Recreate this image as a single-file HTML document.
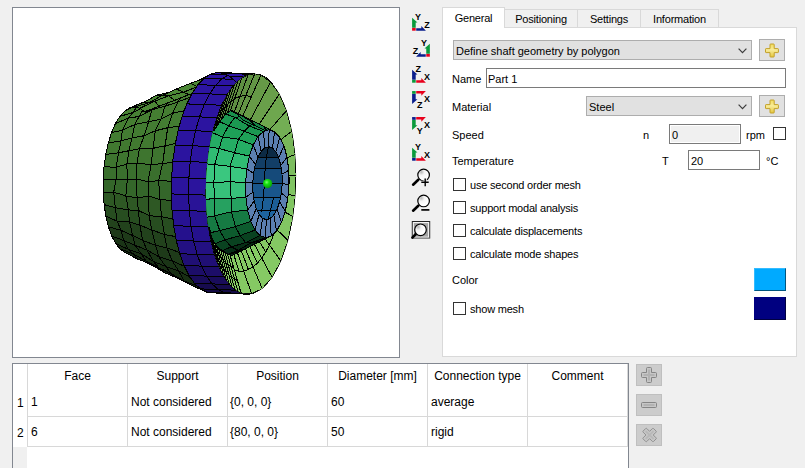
<!DOCTYPE html>
<html><head><meta charset="utf-8"><title>Shaft part</title>
<style>
html,body{margin:0;padding:0}
body{width:805px;height:468px;background:#f0f0f0;position:relative;overflow:hidden;font-family:"Liberation Sans",sans-serif;font-size:11px;color:#000}
.abs,.abs *{position:absolute;box-sizing:border-box}
#view{left:12px;top:7px;width:388px;height:351px;background:#fff;border:1px solid #828790}
#view svg{left:-13px;top:-8px}
.t{white-space:nowrap;line-height:14px;height:14px}
#pane{left:442px;top:27px;width:355px;height:330px;background:#fff;border:1px solid #d9d9d9}
.tab{letter-spacing:-0.2px;top:9px;height:19px;background:#f0f0f0;border:1px solid #d9d9d9;text-align:center;line-height:19px;white-space:nowrap}
.tab.sel{top:7px;height:21px;background:#fff;border-bottom:none;line-height:21px}
.combo{background:#e1e1e1;border:1px solid #adadad;height:20px;line-height:20px;padding-left:2px;white-space:nowrap}
.combo svg{right:4px;top:7px}
.btn{background:#e1e1e1;border:1px solid #adadad}
.inp{background:#fff;border:1px solid #7a7a7a;height:20px;line-height:20px;padding-left:1px;white-space:nowrap}
.cb{width:13px;height:13px;background:#fff;border:1px solid #333}
#tbl{left:12px;top:363px;width:617px;height:110px;background:#fff;border:1px solid #828790}
.seg{font-size:12px;line-height:16px;height:16px;white-space:nowrap}
.vl{width:1px;background:#d8d8d8}
.hl{height:1px;background:#d8d8d8}
.dbtn{left:636px;width:26px;height:22px;background:#cccccc;border:1px solid #bfbfbf}
</style></head><body>
<div class="abs" id="view">
<svg width="400" height="358" viewBox="0 0 400 358" shape-rendering="crispEdges" stroke-linejoin="round">
<path d="M140.0 249.7 L135.0 252.8 L149.0 258.5 L154.4 255.3Z" fill="#12230f" stroke="#000" stroke-width="1"/>
<path d="M154.4 255.3 L149.0 258.5 L163.2 266.1 L169.0 263.2Z" fill="#12230f" stroke="#000" stroke-width="1"/>
<path d="M169.0 263.2 L163.2 266.1 L177.6 271.9 L182.7 267.8Z" fill="#12230f" stroke="#000" stroke-width="1"/>
<path d="M182.7 267.8 L177.6 271.9 L190.4 280.1 L197.7 274.1Z" fill="#12230f" stroke="#000" stroke-width="1"/>
<path d="M197.7 274.1 L190.4 280.1 L205.4 285.2 L213.1 279.1Z" fill="#12230f" stroke="#000" stroke-width="1"/>
<path d="M213.1 279.1 L205.4 285.2 L219.2 291.5 L226.7 286.8Z" fill="#12230f" stroke="#000" stroke-width="1"/>
<path d="M135.0 252.8 L129.9 253.8 L143.5 261.3 L149.0 258.5Z" fill="#132410" stroke="#000" stroke-width="1"/>
<path d="M149.0 258.5 L143.5 261.3 L157.2 268.0 L163.2 266.1Z" fill="#132410" stroke="#000" stroke-width="1"/>
<path d="M163.2 266.1 L157.2 268.0 L170.2 274.5 L177.6 271.9Z" fill="#132410" stroke="#000" stroke-width="1"/>
<path d="M177.6 271.9 L170.2 274.5 L184.3 279.2 L190.4 280.1Z" fill="#132410" stroke="#000" stroke-width="1"/>
<path d="M190.4 280.1 L184.3 279.2 L198.5 287.0 L205.4 285.2Z" fill="#132410" stroke="#000" stroke-width="1"/>
<path d="M205.4 285.2 L198.5 287.0 L211.5 292.9 L219.2 291.5Z" fill="#132410" stroke="#000" stroke-width="1"/>
<path d="M129.9 253.8 L124.8 252.5 L137.3 258.9 L143.5 261.3Z" fill="#142710" stroke="#000" stroke-width="1"/>
<path d="M143.5 261.3 L137.3 258.9 L151.0 264.2 L157.2 268.0Z" fill="#142710" stroke="#000" stroke-width="1"/>
<path d="M157.2 268.0 L151.0 264.2 L164.1 272.5 L170.2 274.5Z" fill="#142710" stroke="#000" stroke-width="1"/>
<path d="M170.2 274.5 L164.1 272.5 L177.7 278.2 L184.3 279.2Z" fill="#142710" stroke="#000" stroke-width="1"/>
<path d="M184.3 279.2 L177.7 278.2 L191.4 285.1 L198.5 287.0Z" fill="#142710" stroke="#000" stroke-width="1"/>
<path d="M198.5 287.0 L191.4 285.1 L204.0 291.0 L211.5 292.9Z" fill="#142710" stroke="#000" stroke-width="1"/>
<path d="M124.8 252.5 L120.1 249.0 L133.0 253.7 L137.3 258.9Z" fill="#152a12" stroke="#000" stroke-width="1"/>
<path d="M137.3 258.9 L133.0 253.7 L146.4 261.4 L151.0 264.2Z" fill="#152a12" stroke="#000" stroke-width="1"/>
<path d="M151.0 264.2 L146.4 261.4 L158.9 267.8 L164.1 272.5Z" fill="#152a12" stroke="#000" stroke-width="1"/>
<path d="M164.1 272.5 L158.9 267.8 L171.6 274.0 L177.7 278.2Z" fill="#152a12" stroke="#000" stroke-width="1"/>
<path d="M177.7 278.2 L171.6 274.0 L184.1 281.0 L191.4 285.1Z" fill="#152a12" stroke="#000" stroke-width="1"/>
<path d="M191.4 285.1 L184.1 281.0 L196.8 285.8 L204.0 291.0Z" fill="#152a12" stroke="#000" stroke-width="1"/>
<path d="M120.1 249.0 L115.6 243.4 L128.3 249.3 L133.0 253.7Z" fill="#182e13" stroke="#000" stroke-width="1"/>
<path d="M133.0 253.7 L128.3 249.3 L141.1 253.6 L146.4 261.4Z" fill="#182e13" stroke="#000" stroke-width="1"/>
<path d="M146.4 261.4 L141.1 253.6 L153.2 261.3 L158.9 267.8Z" fill="#182e13" stroke="#000" stroke-width="1"/>
<path d="M158.9 267.8 L153.2 261.3 L165.6 266.4 L171.6 274.0Z" fill="#182e13" stroke="#000" stroke-width="1"/>
<path d="M171.6 274.0 L165.6 266.4 L178.6 270.8 L184.1 281.0Z" fill="#182e13" stroke="#000" stroke-width="1"/>
<path d="M184.1 281.0 L178.6 270.8 L190.2 277.4 L196.8 285.8Z" fill="#182e13" stroke="#000" stroke-width="1"/>
<path d="M115.6 243.4 L111.7 236.0 L123.6 240.5 L128.3 249.3Z" fill="#1a3416" stroke="#000" stroke-width="1"/>
<path d="M128.3 249.3 L123.6 240.5 L135.2 245.3 L141.1 253.6Z" fill="#1a3416" stroke="#000" stroke-width="1"/>
<path d="M141.1 253.6 L135.2 245.3 L147.1 250.1 L153.2 261.3Z" fill="#1a3416" stroke="#000" stroke-width="1"/>
<path d="M153.2 261.3 L147.1 250.1 L158.9 256.8 L165.6 266.4Z" fill="#1a3416" stroke="#000" stroke-width="1"/>
<path d="M165.6 266.4 L158.9 256.8 L172.2 260.9 L178.6 270.8Z" fill="#1a3416" stroke="#000" stroke-width="1"/>
<path d="M178.6 270.8 L172.2 260.9 L184.3 266.2 L190.2 277.4Z" fill="#1a3416" stroke="#000" stroke-width="1"/>
<path d="M111.7 236.0 L108.4 226.8 L121.2 230.4 L123.6 240.5Z" fill="#1e3a19" stroke="#000" stroke-width="1"/>
<path d="M123.6 240.5 L121.2 230.4 L132.7 235.5 L135.2 245.3Z" fill="#1e3a19" stroke="#000" stroke-width="1"/>
<path d="M135.2 245.3 L132.7 235.5 L142.7 240.5 L147.1 250.1Z" fill="#1e3a19" stroke="#000" stroke-width="1"/>
<path d="M147.1 250.1 L142.7 240.5 L155.5 245.2 L158.9 256.8Z" fill="#1e3a19" stroke="#000" stroke-width="1"/>
<path d="M158.9 256.8 L155.5 245.2 L167.0 247.9 L172.2 260.9Z" fill="#1e3a19" stroke="#000" stroke-width="1"/>
<path d="M172.2 260.9 L167.0 247.9 L179.3 252.4 L184.3 266.2Z" fill="#1e3a19" stroke="#000" stroke-width="1"/>
<path d="M108.4 226.8 L105.9 216.2 L117.0 221.1 L121.2 230.4Z" fill="#22421c" stroke="#000" stroke-width="1"/>
<path d="M121.2 230.4 L117.0 221.1 L129.5 222.0 L132.7 235.5Z" fill="#22421c" stroke="#000" stroke-width="1"/>
<path d="M132.7 235.5 L129.5 222.0 L139.8 225.1 L142.7 240.5Z" fill="#22421c" stroke="#000" stroke-width="1"/>
<path d="M142.7 240.5 L139.8 225.1 L151.8 230.0 L155.5 245.2Z" fill="#22421c" stroke="#000" stroke-width="1"/>
<path d="M155.5 245.2 L151.8 230.0 L164.4 234.4 L167.0 247.9Z" fill="#22421c" stroke="#000" stroke-width="1"/>
<path d="M167.0 247.9 L164.4 234.4 L175.5 236.6 L179.3 252.4Z" fill="#22421c" stroke="#000" stroke-width="1"/>
<path d="M105.9 216.2 L104.1 204.6 L115.3 207.7 L117.0 221.1Z" fill="#274d20" stroke="#000" stroke-width="1"/>
<path d="M117.0 221.1 L115.3 207.7 L128.4 209.9 L129.5 222.0Z" fill="#274d20" stroke="#000" stroke-width="1"/>
<path d="M129.5 222.0 L128.4 209.9 L138.4 210.5 L139.8 225.1Z" fill="#274d20" stroke="#000" stroke-width="1"/>
<path d="M139.8 225.1 L138.4 210.5 L149.1 215.6 L151.8 230.0Z" fill="#274d20" stroke="#000" stroke-width="1"/>
<path d="M151.8 230.0 L149.1 215.6 L161.5 216.8 L164.4 234.4Z" fill="#274d20" stroke="#000" stroke-width="1"/>
<path d="M164.4 234.4 L161.5 216.8 L172.8 219.0 L175.5 236.6Z" fill="#274d20" stroke="#000" stroke-width="1"/>
<path d="M104.1 204.6 L103.2 192.2 L113.7 192.2 L115.3 207.7Z" fill="#2e5824" stroke="#000" stroke-width="1"/>
<path d="M115.3 207.7 L113.7 192.2 L125.8 195.9 L128.4 209.9Z" fill="#2e5824" stroke="#000" stroke-width="1"/>
<path d="M128.4 209.9 L125.8 195.9 L137.1 197.9 L138.4 210.5Z" fill="#2e5824" stroke="#000" stroke-width="1"/>
<path d="M138.4 210.5 L137.1 197.9 L148.6 196.1 L149.1 215.6Z" fill="#2e5824" stroke="#000" stroke-width="1"/>
<path d="M149.1 215.6 L148.6 196.1 L160.0 199.6 L161.5 216.8Z" fill="#2e5824" stroke="#000" stroke-width="1"/>
<path d="M161.5 216.8 L160.0 199.6 L171.5 200.4 L172.8 219.0Z" fill="#2e5824" stroke="#000" stroke-width="1"/>
<path d="M103.2 192.2 L103.2 179.4 L116.1 179.5 L113.7 192.2Z" fill="#34662a" stroke="#000" stroke-width="1"/>
<path d="M113.7 192.2 L116.1 179.5 L127.3 179.4 L125.8 195.9Z" fill="#34662a" stroke="#000" stroke-width="1"/>
<path d="M125.8 195.9 L127.3 179.4 L136.2 179.0 L137.1 197.9Z" fill="#34662a" stroke="#000" stroke-width="1"/>
<path d="M137.1 197.9 L136.2 179.0 L148.1 181.6 L148.6 196.1Z" fill="#34662a" stroke="#000" stroke-width="1"/>
<path d="M148.6 196.1 L148.1 181.6 L158.6 180.7 L160.0 199.6Z" fill="#34662a" stroke="#000" stroke-width="1"/>
<path d="M160.0 199.6 L158.6 180.7 L171.4 181.2 L171.5 200.4Z" fill="#34662a" stroke="#000" stroke-width="1"/>
<path d="M103.2 179.4 L104.0 166.7 L116.2 167.3 L116.1 179.5Z" fill="#3a6f2d" stroke="#000" stroke-width="1"/>
<path d="M116.1 179.5 L116.2 167.3 L126.9 164.0 L127.3 179.4Z" fill="#3a6f2d" stroke="#000" stroke-width="1"/>
<path d="M127.3 179.4 L126.9 164.0 L136.9 163.3 L136.2 179.0Z" fill="#3a6f2d" stroke="#000" stroke-width="1"/>
<path d="M136.2 179.0 L136.9 163.3 L151.1 164.6 L148.1 181.6Z" fill="#3a6f2d" stroke="#000" stroke-width="1"/>
<path d="M148.1 181.6 L151.1 164.6 L162.6 163.6 L158.6 180.7Z" fill="#3a6f2d" stroke="#000" stroke-width="1"/>
<path d="M158.6 180.7 L162.6 163.6 L172.7 162.1 L171.4 181.2Z" fill="#3a6f2d" stroke="#000" stroke-width="1"/>
<path d="M104.0 166.7 L105.8 154.4 L118.5 152.8 L116.2 167.3Z" fill="#3e752f" stroke="#000" stroke-width="1"/>
<path d="M116.2 167.3 L118.5 152.8 L129.0 150.7 L126.9 164.0Z" fill="#3e752f" stroke="#000" stroke-width="1"/>
<path d="M126.9 164.0 L129.0 150.7 L139.4 148.7 L136.9 163.3Z" fill="#3e752f" stroke="#000" stroke-width="1"/>
<path d="M136.9 163.3 L139.4 148.7 L153.1 148.3 L151.1 164.6Z" fill="#3e752f" stroke="#000" stroke-width="1"/>
<path d="M151.1 164.6 L153.1 148.3 L165.1 145.8 L162.6 163.6Z" fill="#3e752f" stroke="#000" stroke-width="1"/>
<path d="M162.6 163.6 L165.1 145.8 L175.3 143.6 L172.7 162.1Z" fill="#3e752f" stroke="#000" stroke-width="1"/>
<path d="M105.8 154.4 L108.3 142.9 L121.1 140.8 L118.5 152.8Z" fill="#417930" stroke="#000" stroke-width="1"/>
<path d="M118.5 152.8 L121.1 140.8 L131.9 138.1 L129.0 150.7Z" fill="#417930" stroke="#000" stroke-width="1"/>
<path d="M129.0 150.7 L131.9 138.1 L144.1 135.7 L139.4 148.7Z" fill="#417930" stroke="#000" stroke-width="1"/>
<path d="M139.4 148.7 L144.1 135.7 L155.3 130.8 L153.1 148.3Z" fill="#417930" stroke="#000" stroke-width="1"/>
<path d="M153.1 148.3 L155.3 130.8 L167.7 127.7 L165.1 145.8Z" fill="#417930" stroke="#000" stroke-width="1"/>
<path d="M165.1 145.8 L167.7 127.7 L179.1 126.3 L175.3 143.6Z" fill="#417930" stroke="#000" stroke-width="1"/>
<path d="M108.3 142.9 L111.6 132.5 L122.4 130.2 L121.1 140.8Z" fill="#437c32" stroke="#000" stroke-width="1"/>
<path d="M121.1 140.8 L122.4 130.2 L134.6 124.6 L131.9 138.1Z" fill="#437c32" stroke="#000" stroke-width="1"/>
<path d="M131.9 138.1 L134.6 124.6 L148.6 121.7 L144.1 135.7Z" fill="#437c32" stroke="#000" stroke-width="1"/>
<path d="M144.1 135.7 L148.6 121.7 L161.1 119.1 L155.3 130.8Z" fill="#437c32" stroke="#000" stroke-width="1"/>
<path d="M155.3 130.8 L161.1 119.1 L172.7 113.2 L167.7 127.7Z" fill="#437c32" stroke="#000" stroke-width="1"/>
<path d="M167.7 127.7 L172.7 113.2 L184.0 110.7 L179.1 126.3Z" fill="#437c32" stroke="#000" stroke-width="1"/>
<path d="M111.6 132.5 L115.4 123.6 L128.2 118.2 L122.4 130.2Z" fill="#457e32" stroke="#000" stroke-width="1"/>
<path d="M122.4 130.2 L128.2 118.2 L139.2 116.4 L134.6 124.6Z" fill="#457e32" stroke="#000" stroke-width="1"/>
<path d="M134.6 124.6 L139.2 116.4 L151.9 109.7 L148.6 121.7Z" fill="#457e32" stroke="#000" stroke-width="1"/>
<path d="M148.6 121.7 L151.9 109.7 L164.9 106.2 L161.1 119.1Z" fill="#457e32" stroke="#000" stroke-width="1"/>
<path d="M161.1 119.1 L164.9 106.2 L177.8 102.0 L172.7 113.2Z" fill="#457e32" stroke="#000" stroke-width="1"/>
<path d="M172.7 113.2 L177.8 102.0 L189.9 97.3 L184.0 110.7Z" fill="#457e32" stroke="#000" stroke-width="1"/>
<path d="M115.4 123.6 L119.8 116.4 L133.6 112.4 L128.2 118.2Z" fill="#478134" stroke="#000" stroke-width="1"/>
<path d="M128.2 118.2 L133.6 112.4 L145.2 105.8 L139.2 116.4Z" fill="#478134" stroke="#000" stroke-width="1"/>
<path d="M139.2 116.4 L145.2 105.8 L157.5 100.5 L151.9 109.7Z" fill="#478134" stroke="#000" stroke-width="1"/>
<path d="M151.9 109.7 L157.5 100.5 L171.6 97.9 L164.9 106.2Z" fill="#478134" stroke="#000" stroke-width="1"/>
<path d="M164.9 106.2 L171.6 97.9 L184.3 91.4 L177.8 102.0Z" fill="#478134" stroke="#000" stroke-width="1"/>
<path d="M177.8 102.0 L184.3 91.4 L196.5 86.5 L189.9 97.3Z" fill="#478134" stroke="#000" stroke-width="1"/>
<path d="M119.8 116.4 L124.6 111.1 L137.3 104.5 L133.6 112.4Z" fill="#488334" stroke="#000" stroke-width="1"/>
<path d="M133.6 112.4 L137.3 104.5 L151.7 100.2 L145.2 105.8Z" fill="#488334" stroke="#000" stroke-width="1"/>
<path d="M145.2 105.8 L151.7 100.2 L163.4 94.4 L157.5 100.5Z" fill="#488334" stroke="#000" stroke-width="1"/>
<path d="M157.5 100.5 L163.4 94.4 L177.2 89.4 L171.6 97.9Z" fill="#488334" stroke="#000" stroke-width="1"/>
<path d="M171.6 97.9 L177.2 89.4 L191.1 83.5 L184.3 91.4Z" fill="#488334" stroke="#000" stroke-width="1"/>
<path d="M184.3 91.4 L191.1 83.5 L203.7 78.6 L196.5 86.5Z" fill="#488334" stroke="#000" stroke-width="1"/>
<path d="M124.6 111.1 L129.6 108.0 L143.6 102.3 L137.3 104.5Z" fill="#498435" stroke="#000" stroke-width="1"/>
<path d="M137.3 104.5 L143.6 102.3 L156.9 95.1 L151.7 100.2Z" fill="#498435" stroke="#000" stroke-width="1"/>
<path d="M151.7 100.2 L156.9 95.1 L171.2 92.0 L163.4 94.4Z" fill="#498435" stroke="#000" stroke-width="1"/>
<path d="M163.4 94.4 L171.2 92.0 L184.7 85.5 L177.2 89.4Z" fill="#498435" stroke="#000" stroke-width="1"/>
<path d="M177.2 89.4 L184.7 85.5 L197.3 81.0 L191.1 83.5Z" fill="#498435" stroke="#000" stroke-width="1"/>
<path d="M191.1 83.5 L197.3 81.0 L211.2 73.9 L203.7 78.6Z" fill="#498435" stroke="#000" stroke-width="1"/>
<path d="M129.6 108.0 L134.7 107.0 L148.4 102.9 L143.6 102.3Z" fill="#4a8535" stroke="#000" stroke-width="1"/>
<path d="M143.6 102.3 L148.4 102.9 L162.4 95.4 L156.9 95.1Z" fill="#4a8535" stroke="#000" stroke-width="1"/>
<path d="M156.9 95.1 L162.4 95.4 L176.3 89.0 L171.2 92.0Z" fill="#4a8535" stroke="#000" stroke-width="1"/>
<path d="M171.2 92.0 L176.3 89.0 L190.7 83.3 L184.7 85.5Z" fill="#4a8535" stroke="#000" stroke-width="1"/>
<path d="M184.7 85.5 L190.7 83.3 L204.5 78.4 L197.3 81.0Z" fill="#4a8535" stroke="#000" stroke-width="1"/>
<path d="M197.3 81.0 L204.5 78.4 L218.9 72.5 L211.2 73.9Z" fill="#4a8535" stroke="#000" stroke-width="1"/>
<path d="M134.7 107.0 L139.8 108.3 L154.8 101.1 L148.4 102.9Z" fill="#4b8736" stroke="#000" stroke-width="1"/>
<path d="M148.4 102.9 L154.8 101.1 L168.7 95.8 L162.4 95.4Z" fill="#4b8736" stroke="#000" stroke-width="1"/>
<path d="M162.4 95.4 L168.7 95.8 L183.5 92.2 L176.3 89.0Z" fill="#4b8736" stroke="#000" stroke-width="1"/>
<path d="M176.3 89.0 L183.5 92.2 L197.6 86.6 L190.7 83.3Z" fill="#4b8736" stroke="#000" stroke-width="1"/>
<path d="M190.7 83.3 L197.6 86.6 L212.6 81.5 L204.5 78.4Z" fill="#4b8736" stroke="#000" stroke-width="1"/>
<path d="M204.5 78.4 L212.6 81.5 L226.4 74.4 L218.9 72.5Z" fill="#4b8736" stroke="#000" stroke-width="1"/>
<path d="M139.8 108.3 L144.5 111.8 L158.8 106.3 L154.8 101.1Z" fill="#4c8836" stroke="#000" stroke-width="1"/>
<path d="M154.8 101.1 L158.8 106.3 L174.7 100.3 L168.7 95.8Z" fill="#4c8836" stroke="#000" stroke-width="1"/>
<path d="M168.7 95.8 L174.7 100.3 L188.9 94.7 L183.5 92.2Z" fill="#4c8836" stroke="#000" stroke-width="1"/>
<path d="M183.5 92.2 L188.9 94.7 L204.0 90.1 L197.6 86.6Z" fill="#4c8836" stroke="#000" stroke-width="1"/>
<path d="M197.6 86.6 L204.0 90.1 L219.7 83.6 L212.6 81.5Z" fill="#4c8836" stroke="#000" stroke-width="1"/>
<path d="M212.6 81.5 L219.7 83.6 L233.6 79.6 L226.4 74.4Z" fill="#4c8836" stroke="#000" stroke-width="1"/>
<path d="M219.9 291.2 L213.3 292.9 L231.2 293.6 L237.9 291.9Z" fill="#11083a" stroke="#000" stroke-width="1"/>
<path d="M237.9 291.9 L231.2 293.6 L249.1 294.2 L255.9 292.5Z" fill="#11083a" stroke="#000" stroke-width="1"/>
<path d="M213.3 292.9 L206.8 292.1 L224.6 292.8 L231.2 293.6Z" fill="#12093f" stroke="#000" stroke-width="1"/>
<path d="M231.2 293.6 L224.6 292.8 L242.4 293.4 L249.1 294.2Z" fill="#12093f" stroke="#000" stroke-width="1"/>
<path d="M206.8 292.1 L200.4 288.9 L218.2 289.5 L224.6 292.8Z" fill="#130a44" stroke="#000" stroke-width="1"/>
<path d="M224.6 292.8 L218.2 289.5 L235.9 290.2 L242.4 293.4Z" fill="#130a44" stroke="#000" stroke-width="1"/>
<path d="M200.4 288.9 L194.4 283.3 L212.1 283.9 L218.2 289.5Z" fill="#160b4d" stroke="#000" stroke-width="1"/>
<path d="M218.2 289.5 L212.1 283.9 L229.8 284.6 L235.9 290.2Z" fill="#160b4d" stroke="#000" stroke-width="1"/>
<path d="M194.4 283.3 L188.9 275.4 L206.5 276.1 L212.1 283.9Z" fill="#190c5a" stroke="#000" stroke-width="1"/>
<path d="M212.1 283.9 L206.5 276.1 L224.1 276.7 L229.8 284.6Z" fill="#190c5a" stroke="#000" stroke-width="1"/>
<path d="M188.9 275.4 L184.0 265.5 L201.5 266.1 L206.5 276.1Z" fill="#1c0d68" stroke="#000" stroke-width="1"/>
<path d="M206.5 276.1 L201.5 266.1 L219.0 266.8 L224.1 276.7Z" fill="#1c0d68" stroke="#000" stroke-width="1"/>
<path d="M184.0 265.5 L179.7 253.7 L197.1 254.4 L201.5 266.1Z" fill="#200f75" stroke="#000" stroke-width="1"/>
<path d="M201.5 266.1 L197.1 254.4 L214.6 255.0 L219.0 266.8Z" fill="#200f75" stroke="#000" stroke-width="1"/>
<path d="M179.7 253.7 L176.2 240.4 L193.6 241.0 L197.1 254.4Z" fill="#231082" stroke="#000" stroke-width="1"/>
<path d="M197.1 254.4 L193.6 241.0 L211.0 241.6 L214.6 255.0Z" fill="#231082" stroke="#000" stroke-width="1"/>
<path d="M176.2 240.4 L173.7 225.7 L191.0 226.3 L193.6 241.0Z" fill="#25118d" stroke="#000" stroke-width="1"/>
<path d="M193.6 241.0 L191.0 226.3 L208.4 227.0 L211.0 241.6Z" fill="#25118d" stroke="#000" stroke-width="1"/>
<path d="M173.7 225.7 L172.0 210.1 L189.3 210.7 L191.0 226.3Z" fill="#271292" stroke="#000" stroke-width="1"/>
<path d="M191.0 226.3 L189.3 210.7 L206.6 211.4 L208.4 227.0Z" fill="#271292" stroke="#000" stroke-width="1"/>
<path d="M172.0 210.1 L171.3 193.9 L188.6 194.5 L189.3 210.7Z" fill="#291397" stroke="#000" stroke-width="1"/>
<path d="M189.3 210.7 L188.6 194.5 L205.9 195.1 L206.6 211.4Z" fill="#291397" stroke="#000" stroke-width="1"/>
<path d="M171.3 193.9 L171.6 177.4 L188.9 178.0 L188.6 194.5Z" fill="#2b149d" stroke="#000" stroke-width="1"/>
<path d="M188.6 194.5 L188.9 178.0 L206.2 178.7 L205.9 195.1Z" fill="#2b149d" stroke="#000" stroke-width="1"/>
<path d="M171.6 177.4 L172.8 161.0 L190.2 161.7 L188.9 178.0Z" fill="#2b149e" stroke="#000" stroke-width="1"/>
<path d="M188.9 178.0 L190.2 161.7 L207.5 162.3 L206.2 178.7Z" fill="#2b149e" stroke="#000" stroke-width="1"/>
<path d="M172.8 161.0 L175.1 145.2 L192.4 145.8 L190.2 161.7Z" fill="#2b149f" stroke="#000" stroke-width="1"/>
<path d="M190.2 161.7 L192.4 145.8 L209.7 146.4 L207.5 162.3Z" fill="#2b149f" stroke="#000" stroke-width="1"/>
<path d="M175.1 145.2 L178.2 130.1 L195.5 130.8 L192.4 145.8Z" fill="#2b149f" stroke="#000" stroke-width="1"/>
<path d="M192.4 145.8 L195.5 130.8 L212.9 131.4 L209.7 146.4Z" fill="#2b149f" stroke="#000" stroke-width="1"/>
<path d="M178.2 130.1 L182.1 116.3 L199.5 116.9 L195.5 130.8Z" fill="#2c14a0" stroke="#000" stroke-width="1"/>
<path d="M195.5 130.8 L199.5 116.9 L216.9 117.6 L212.9 131.4Z" fill="#2c14a0" stroke="#000" stroke-width="1"/>
<path d="M182.1 116.3 L186.8 103.9 L204.2 104.6 L199.5 116.9Z" fill="#2c14a0" stroke="#000" stroke-width="1"/>
<path d="M199.5 116.9 L204.2 104.6 L221.7 105.2 L216.9 117.6Z" fill="#2c14a0" stroke="#000" stroke-width="1"/>
<path d="M186.8 103.9 L192.1 93.3 L209.6 93.9 L204.2 104.6Z" fill="#2c14a1" stroke="#000" stroke-width="1"/>
<path d="M204.2 104.6 L209.6 93.9 L227.1 94.6 L221.7 105.2Z" fill="#2c14a1" stroke="#000" stroke-width="1"/>
<path d="M192.1 93.3 L197.9 84.7 L215.5 85.3 L209.6 93.9Z" fill="#2c14a1" stroke="#000" stroke-width="1"/>
<path d="M209.6 93.9 L215.5 85.3 L233.1 86.0 L227.1 94.6Z" fill="#2c14a1" stroke="#000" stroke-width="1"/>
<path d="M197.9 84.7 L204.1 78.3 L221.8 78.9 L215.5 85.3Z" fill="#2c14a2" stroke="#000" stroke-width="1"/>
<path d="M215.5 85.3 L221.8 78.9 L239.5 79.5 L233.1 86.0Z" fill="#2c14a2" stroke="#000" stroke-width="1"/>
<path d="M204.1 78.3 L210.5 74.2 L228.3 74.8 L221.8 78.9Z" fill="#2c14a2" stroke="#000" stroke-width="1"/>
<path d="M221.8 78.9 L228.3 74.8 L246.1 75.5 L239.5 79.5Z" fill="#2c14a2" stroke="#000" stroke-width="1"/>
<path d="M210.5 74.2 L217.1 72.5 L235.0 73.1 L228.3 74.8Z" fill="#2d14a3" stroke="#000" stroke-width="1"/>
<path d="M228.3 74.8 L235.0 73.1 L252.9 73.8 L246.1 75.5Z" fill="#2d14a3" stroke="#000" stroke-width="1"/>
<path d="M217.1 72.5 L223.6 73.3 L241.6 73.9 L235.0 73.1Z" fill="#2d14a3" stroke="#000" stroke-width="1"/>
<path d="M235.0 73.1 L241.6 73.9 L259.6 74.6 L252.9 73.8Z" fill="#2d14a3" stroke="#000" stroke-width="1"/>
<path d="M223.6 73.3 L230.0 76.5 L248.0 77.2 L241.6 73.9Z" fill="#2d14a4" stroke="#000" stroke-width="1"/>
<path d="M241.6 73.9 L248.0 77.2 L266.1 77.8 L259.6 74.6Z" fill="#2d14a4" stroke="#000" stroke-width="1"/>
<path d="M230.0 76.5 L236.0 82.1 L254.1 82.8 L248.0 77.2Z" fill="#2d14a4" stroke="#000" stroke-width="1"/>
<path d="M248.0 77.2 L254.1 82.8 L272.2 83.4 L266.1 77.8Z" fill="#2d14a4" stroke="#000" stroke-width="1"/>
<clipPath id="cC"><path d="M296.0 185.5 L295.7 191.3 L295.3 197.0 L294.8 202.7 L294.2 208.4 L293.5 214.0 L292.6 219.5 L291.7 224.9 L290.6 230.2 L289.4 235.4 L288.1 240.4 L286.7 245.3 L285.2 250.0 L283.7 254.5 L282.0 258.9 L280.2 263.0 L278.4 266.9 L276.5 270.6 L274.5 274.1 L272.4 277.3 L270.3 280.2 L268.2 282.9 L266.0 285.3 L263.7 287.5 L261.4 289.3 L259.1 290.9 L256.8 292.1 L254.4 293.1 L252.1 293.8 L249.7 294.2 L247.3 294.2 L245.0 294.0 L242.7 293.5 L240.4 292.6 L238.1 291.5 L235.8 290.1 L233.6 288.4 L231.5 286.4 L229.4 284.1 L227.3 281.5 L225.3 278.7 L223.4 275.6 L221.6 272.3 L219.9 268.7 L218.2 264.9 L216.6 260.9 L215.1 256.7 L213.7 252.2 L212.5 247.6 L211.3 242.8 L210.2 237.8 L209.3 232.7 L208.4 227.5 L207.7 222.1 L207.1 216.6 L206.6 211.1 L206.2 205.5 L206.0 199.8 L205.9 194.0 L205.9 188.3 L206.0 182.5 L206.3 176.7 L206.7 171.0 L207.2 165.3 L207.8 159.6 L208.5 154.0 L209.4 148.5 L210.3 143.1 L211.4 137.8 L212.6 132.6 L213.9 127.6 L215.3 122.7 L216.8 118.0 L218.3 113.5 L220.0 109.1 L221.8 105.0 L223.6 101.1 L225.5 97.4 L227.5 93.9 L229.6 90.7 L231.7 87.8 L233.8 85.1 L236.0 82.7 L238.3 80.5 L240.6 78.7 L242.9 77.1 L245.2 75.9 L247.6 74.9 L249.9 74.2 L252.3 73.8 L254.7 73.8 L257.0 74.0 L259.3 74.5 L261.6 75.4 L263.9 76.5 L266.2 77.9 L268.4 79.6 L270.5 81.6 L272.6 83.9 L274.7 86.5 L276.7 89.3 L278.6 92.4 L280.4 95.7 L282.1 99.3 L283.8 103.1 L285.4 107.1 L286.9 111.3 L288.3 115.8 L289.5 120.4 L290.7 125.2 L291.8 130.2 L292.7 135.3 L293.6 140.5 L294.3 145.9 L294.9 151.4 L295.4 156.9 L295.8 162.5 L296.0 168.2 L296.1 174.0 L296.1 179.7Z"/></clipPath>
<g clip-path="url(#cC)">
<path d="M251.0 184.0 L296.0 185.5 L295.5 194.1Z" fill="#80c462"/>
<path d="M251.0 184.0 L295.6 193.2 L294.9 201.8Z" fill="#81c562"/>
<path d="M251.0 184.0 L295.0 200.8 L294.1 209.3Z" fill="#81c562"/>
<path d="M251.0 184.0 L294.2 208.4 L293.1 216.7Z" fill="#81c562"/>
<path d="M251.0 184.0 L293.2 215.8 L291.8 224.0Z" fill="#82c663"/>
<path d="M251.0 184.0 L292.0 223.1 L290.4 231.1Z" fill="#82c663"/>
<path d="M251.0 184.0 L290.6 230.2 L288.8 237.9Z" fill="#83c763"/>
<path d="M251.0 184.0 L289.0 237.1 L287.0 244.5Z" fill="#83c763"/>
<path d="M251.0 184.0 L287.2 243.7 L285.0 250.8Z" fill="#83c763"/>
<path d="M251.0 184.0 L285.2 250.0 L282.8 256.7Z" fill="#84c863"/>
<path d="M251.0 184.0 L283.1 256.0 L280.5 262.3Z" fill="#84c863"/>
<path d="M251.0 184.0 L280.8 261.7 L278.1 267.6Z" fill="#85c964"/>
<path d="M251.0 184.0 L278.4 266.9 L275.5 272.4Z" fill="#85c964"/>
<path d="M251.0 184.0 L275.8 271.8 L272.8 276.8Z" fill="#85c964"/>
<path d="M251.0 184.0 L273.1 276.2 L270.0 280.7Z" fill="#86ca64"/>
<path d="M251.0 184.0 L270.3 280.2 L267.1 284.1Z" fill="#86ca64"/>
<path d="M251.0 184.0 L267.4 283.7 L264.1 287.1Z" fill="#86ca64"/>
<path d="M251.0 184.0 L264.5 286.8 L261.0 289.6Z" fill="#86ca64"/>
<path d="M251.0 184.0 L261.4 289.3 L257.9 291.5Z" fill="#86ca64"/>
<path d="M251.0 184.0 L258.3 291.3 L254.8 293.0Z" fill="#85c963"/>
<path d="M251.0 184.0 L255.2 292.8 L251.7 293.9Z" fill="#85c963"/>
<path d="M251.0 184.0 L252.1 293.8 L248.5 294.2Z" fill="#85c963"/>
<path d="M251.0 184.0 L248.9 294.2 L245.4 294.1Z" fill="#85c963"/>
<path d="M251.0 184.0 L245.8 294.1 L242.3 293.4Z" fill="#85c963"/>
<path d="M251.0 184.0 L242.7 293.5 L239.2 292.1Z" fill="#85c963"/>
<path d="M251.0 184.0 L239.6 292.3 L236.2 290.4Z" fill="#85c963"/>
<path d="M251.0 184.0 L236.6 290.6 L233.3 288.1Z" fill="#84c862"/>
<path d="M251.0 184.0 L233.6 288.4 L230.4 285.3Z" fill="#84c862"/>
<path d="M251.0 184.0 L230.8 285.7 L227.7 282.0Z" fill="#84c862"/>
<path d="M251.0 184.0 L228.0 282.4 L225.0 278.2Z" fill="#84c862"/>
<path d="M251.0 184.0 L225.3 278.7 L222.5 274.0Z" fill="#83c661"/>
<path d="M251.0 184.0 L222.8 274.6 L220.1 269.3Z" fill="#81c360"/>
<path d="M251.0 184.0 L220.4 270.0 L217.9 264.3Z" fill="#80c05e"/>
<path d="M251.0 184.0 L218.2 264.9 L215.9 258.8Z" fill="#7ebd5d"/>
<path d="M251.0 184.0 L216.1 259.5 L214.0 253.0Z" fill="#7cba5c"/>
<path d="M251.0 184.0 L214.2 253.7 L212.3 246.8Z" fill="#7ab65a"/>
<path d="M251.0 184.0 L212.5 247.6 L210.7 240.3Z" fill="#79b359"/>
<path d="M251.0 184.0 L210.9 241.2 L209.4 233.6Z" fill="#77b057"/>
<path d="M251.0 184.0 L209.6 234.4 L208.3 226.6Z" fill="#75ad56"/>
<path d="M251.0 184.0 L208.4 227.5 L207.4 219.4Z" fill="#73aa54"/>
<path d="M251.0 184.0 L207.5 220.3 L206.7 212.0Z" fill="#72a653"/>
<path d="M251.0 184.0 L206.8 213.0 L206.2 204.5Z" fill="#70a351"/>
<path d="M251.0 184.0 L206.2 205.5 L205.9 196.9Z" fill="#6ea050"/>
<path d="M251.0 184.0 L206.0 197.9 L205.9 189.2Z" fill="#6c9d4e"/>
<path d="M251.0 184.0 L205.9 190.2 L206.1 181.5Z" fill="#6a9b4c"/>
<path d="M251.0 184.0 L206.0 182.5 L206.5 173.9Z" fill="#68984b"/>
<path d="M251.0 184.0 L206.4 174.8 L207.1 166.2Z" fill="#659549"/>
<path d="M251.0 184.0 L207.0 167.2 L207.9 158.7Z" fill="#639347"/>
<path d="M251.0 184.0 L207.8 159.6 L208.9 151.3Z" fill="#619045"/>
<path d="M251.0 184.0 L208.8 152.2 L210.2 144.0Z" fill="#5f8d44"/>
<path d="M251.0 184.0 L210.0 144.9 L211.6 136.9Z" fill="#5d8b42"/>
<path d="M251.0 184.0 L211.4 137.8 L213.2 130.1Z" fill="#5b8840"/>
<path d="M251.0 184.0 L213.0 130.9 L215.0 123.5Z" fill="#59853e"/>
<path d="M251.0 184.0 L214.8 124.3 L217.0 117.2Z" fill="#57833c"/>
<path d="M251.0 184.0 L216.8 118.0 L219.2 111.3Z" fill="#57833c"/>
<path d="M251.0 184.0 L218.9 112.0 L221.5 105.7Z" fill="#57843d"/>
<path d="M251.0 184.0 L221.2 106.3 L223.9 100.4Z" fill="#58853d"/>
<path d="M251.0 184.0 L223.6 101.1 L226.5 95.6Z" fill="#59863e"/>
<path d="M251.0 184.0 L226.2 96.2 L229.2 91.2Z" fill="#59873e"/>
<path d="M251.0 184.0 L228.9 91.8 L232.0 87.3Z" fill="#5a893f"/>
<path d="M251.0 184.0 L231.7 87.8 L234.9 83.9Z" fill="#5b8a3f"/>
<path d="M251.0 184.0 L234.6 84.3 L237.9 80.9Z" fill="#5b8b40"/>
<path d="M251.0 184.0 L237.5 81.2 L241.0 78.4Z" fill="#5c8c40"/>
<path d="M251.0 184.0 L240.6 78.7 L244.1 76.5Z" fill="#5d8e41"/>
<path d="M251.0 184.0 L243.7 76.7 L247.2 75.0Z" fill="#5e8f42"/>
<path d="M251.0 184.0 L246.8 75.2 L250.3 74.1Z" fill="#5f9142"/>
<path d="M251.0 184.0 L249.9 74.2 L253.5 73.8Z" fill="#609243"/>
<path d="M251.0 184.0 L253.1 73.8 L256.6 73.9Z" fill="#629444"/>
<path d="M251.0 184.0 L256.2 73.9 L259.7 74.6Z" fill="#639645"/>
<path d="M251.0 184.0 L259.3 74.5 L262.8 75.9Z" fill="#649746"/>
<path d="M251.0 184.0 L262.4 75.7 L265.8 77.6Z" fill="#659946"/>
<path d="M251.0 184.0 L265.4 77.4 L268.7 79.9Z" fill="#669a47"/>
<path d="M251.0 184.0 L268.4 79.6 L271.6 82.7Z" fill="#679c48"/>
<path d="M251.0 184.0 L271.2 82.3 L274.3 86.0Z" fill="#689e49"/>
<path d="M251.0 184.0 L274.0 85.6 L277.0 89.8Z" fill="#699f4a"/>
<path d="M251.0 184.0 L276.7 89.3 L279.5 94.0Z" fill="#6ba14b"/>
<path d="M251.0 184.0 L279.2 93.4 L281.9 98.7Z" fill="#6ca44c"/>
<path d="M251.0 184.0 L281.6 98.0 L284.1 103.7Z" fill="#6ea64e"/>
<path d="M251.0 184.0 L283.8 103.1 L286.1 109.2Z" fill="#6fa850"/>
<path d="M251.0 184.0 L285.9 108.5 L288.0 115.0Z" fill="#71ab51"/>
<path d="M251.0 184.0 L287.8 114.3 L289.7 121.2Z" fill="#72ad53"/>
<path d="M251.0 184.0 L289.5 120.4 L291.3 127.7Z" fill="#74b054"/>
<path d="M251.0 184.0 L291.1 126.8 L292.6 134.4Z" fill="#75b256"/>
<path d="M251.0 184.0 L292.4 133.6 L293.7 141.4Z" fill="#76b458"/>
<path d="M251.0 184.0 L293.6 140.5 L294.6 148.6Z" fill="#78b759"/>
<path d="M251.0 184.0 L294.5 147.7 L295.3 156.0Z" fill="#79b95b"/>
<path d="M251.0 184.0 L295.2 155.0 L295.8 163.5Z" fill="#7bbc5c"/>
<path d="M251.0 184.0 L295.8 162.5 L296.1 171.1Z" fill="#7cbe5e"/>
<path d="M251.0 184.0 L296.0 170.1 L296.1 178.8Z" fill="#7ec060"/>
<path d="M251.0 184.0 L296.1 177.8 L295.9 186.5Z" fill="#7fc361"/>
<path d="M261.0 75.1 L270.7 81.8 L245.5 128.9 L238.6 125.3Z" fill="#669a47" stroke="#000" stroke-width="1"/>
<path d="M270.7 81.8 L279.4 93.8 L251.7 135.3 L245.5 128.9Z" fill="#699f4a" stroke="#000" stroke-width="1"/>
<path d="M279.4 93.8 L286.6 110.6 L257.0 144.1 L251.7 135.3Z" fill="#6ea74e" stroke="#000" stroke-width="1"/>
<path d="M286.6 110.6 L292.0 131.1 L260.9 155.0 L257.0 144.1Z" fill="#73ae54" stroke="#000" stroke-width="1"/>
<path d="M292.0 131.1 L295.2 154.4 L263.3 167.3 L260.9 155.0Z" fill="#78b659" stroke="#000" stroke-width="1"/>
<path d="M295.2 154.4 L296.1 175.0 L282.4 176.3 L281.5 159.9Z" fill="#7cbd5e" stroke="#000" stroke-width="1"/>
<path d="M281.5 159.9 L282.4 176.3 L264.1 178.1 L263.3 167.3Z" fill="#7cbd5e" stroke="#000" stroke-width="1"/>
<path d="M296.1 175.0 L295.4 196.0 L281.8 193.1 L282.4 176.3Z" fill="#80c462" stroke="#000" stroke-width="1"/>
<path d="M282.4 176.3 L281.8 193.1 L263.7 189.2 L264.1 178.1Z" fill="#80c462" stroke="#000" stroke-width="1"/>
<path d="M295.4 196.0 L293.1 216.5 L279.9 209.4 L281.8 193.1Z" fill="#81c562" stroke="#000" stroke-width="1"/>
<path d="M281.8 193.1 L279.9 209.4 L262.2 200.0 L263.7 189.2Z" fill="#81c562" stroke="#000" stroke-width="1"/>
<path d="M293.1 216.5 L288.1 240.4 L275.6 228.5 L279.9 209.4Z" fill="#82c663" stroke="#000" stroke-width="1"/>
<path d="M288.1 240.4 L281.0 261.2 L269.4 245.0 L275.6 228.5Z" fill="#84c863" stroke="#000" stroke-width="1"/>
<path d="M281.0 261.2 L272.2 277.5 L261.7 258.0 L269.4 245.0Z" fill="#85c964" stroke="#000" stroke-width="1"/>
<path d="M272.2 277.5 L262.3 288.7 L253.0 266.9 L261.7 258.0Z" fill="#86ca64" stroke="#000" stroke-width="1"/>
<path d="M262.3 288.7 L251.6 293.9 L243.7 271.0 L253.0 266.9Z" fill="#85c963" stroke="#000" stroke-width="1"/>
<path d="M251.6 293.9 L241.0 292.9 L234.4 270.2 L243.7 271.0Z" fill="#85c963" stroke="#000" stroke-width="1"/>
<path d="M279.9 209.4 L278.0 219.2 L260.7 206.4 L262.2 200.0Z" fill="#82c663" stroke="#000" stroke-width="1"/>
<path d="M278.0 219.2 L275.6 228.5 L258.8 212.5 L260.7 206.4Z" fill="#83c763" stroke="#000" stroke-width="1"/>
<path d="M275.6 228.5 L272.7 237.1 L256.5 218.2 L258.8 212.5Z" fill="#83c763" stroke="#000" stroke-width="1"/>
<path d="M272.7 237.1 L269.4 245.0 L253.9 223.4 L256.5 218.2Z" fill="#84c863" stroke="#000" stroke-width="1"/>
<path d="M269.4 245.0 L265.7 252.0 L251.0 228.0 L253.9 223.4Z" fill="#85c964" stroke="#000" stroke-width="1"/>
<path d="M265.7 252.0 L261.7 258.0 L247.8 232.0 L251.0 228.0Z" fill="#85c964" stroke="#000" stroke-width="1"/>
<path d="M261.7 258.0 L257.5 263.0 L244.3 235.3 L247.8 232.0Z" fill="#86ca64" stroke="#000" stroke-width="1"/>
<path d="M257.5 263.0 L253.0 266.9 L240.7 237.8 L244.3 235.3Z" fill="#86ca64" stroke="#000" stroke-width="1"/>
<path d="M253.0 266.9 L248.4 269.5 L237.0 239.5 L240.7 237.8Z" fill="#86ca64" stroke="#000" stroke-width="1"/>
<path d="M248.4 269.5 L243.7 271.0 L233.2 240.5 L237.0 239.5Z" fill="#85c963" stroke="#000" stroke-width="1"/>
<path d="M243.7 271.0 L239.0 271.2 L229.4 240.6 L233.2 240.5Z" fill="#85c963" stroke="#000" stroke-width="1"/>
<path d="M239.0 271.2 L234.4 270.2 L225.6 239.9 L229.4 240.6Z" fill="#85c963" stroke="#000" stroke-width="1"/>
<path d="M241.0 292.9 L237.9 291.4 L234.5 279.1 L237.4 280.4Z" fill="#85c963" stroke="#000" stroke-width="1"/>
<path d="M237.4 280.4 L234.5 279.1 L231.0 266.4 L233.6 267.5Z" fill="#85c963" stroke="#000" stroke-width="1"/>
<path d="M233.6 267.5 L231.0 266.4 L223.4 239.1 L225.6 239.9Z" fill="#85c963" stroke="#000" stroke-width="1"/>
<path d="M237.9 291.4 L234.8 289.4 L231.6 277.2 L234.5 279.1Z" fill="#85c963" stroke="#000" stroke-width="1"/>
<path d="M234.5 279.1 L231.6 277.2 L228.3 264.8 L231.0 266.4Z" fill="#85c963" stroke="#000" stroke-width="1"/>
<path d="M231.0 266.4 L228.3 264.8 L221.2 238.0 L223.4 239.1Z" fill="#85c963" stroke="#000" stroke-width="1"/>
<path d="M234.8 289.4 L231.9 286.8 L228.9 274.9 L231.6 277.2Z" fill="#84c862" stroke="#000" stroke-width="1"/>
<path d="M231.6 277.2 L228.9 274.9 L225.8 262.8 L228.3 264.8Z" fill="#84c862" stroke="#000" stroke-width="1"/>
<path d="M228.3 264.8 L225.8 262.8 L219.1 236.6 L221.2 238.0Z" fill="#84c862" stroke="#000" stroke-width="1"/>
<path d="M231.9 286.8 L229.0 283.7 L226.2 272.2 L228.9 274.9Z" fill="#84c862" stroke="#000" stroke-width="1"/>
<path d="M228.9 274.9 L226.2 272.2 L223.3 260.4 L225.8 262.8Z" fill="#84c862" stroke="#000" stroke-width="1"/>
<path d="M225.8 262.8 L223.3 260.4 L217.1 235.0 L219.1 236.6Z" fill="#84c862" stroke="#000" stroke-width="1"/>
<path d="M229.0 283.7 L226.2 280.0 L223.6 269.0 L226.2 272.2Z" fill="#84c862" stroke="#000" stroke-width="1"/>
<path d="M226.2 272.2 L223.6 269.0 L220.9 257.5 L223.3 260.4Z" fill="#84c862" stroke="#000" stroke-width="1"/>
<path d="M223.3 260.4 L220.9 257.5 L215.1 233.0 L217.1 235.0Z" fill="#84c862" stroke="#000" stroke-width="1"/>
<path d="M226.2 280.0 L223.6 275.9 L221.2 265.3 L223.6 269.0Z" fill="#84c762" stroke="#000" stroke-width="1"/>
<path d="M223.6 269.0 L221.2 265.3 L218.6 254.4 L220.9 257.5Z" fill="#84c762" stroke="#000" stroke-width="1"/>
<path d="M220.9 257.5 L218.6 254.4 L213.2 230.9 L215.1 233.0Z" fill="#84c762" stroke="#000" stroke-width="1"/>
<path d="M223.6 275.9 L221.1 271.4 L218.8 261.2 L221.2 265.3Z" fill="#82c460" stroke="#000" stroke-width="1"/>
<path d="M221.2 265.3 L218.8 261.2 L216.5 250.8 L218.6 254.4Z" fill="#82c460" stroke="#000" stroke-width="1"/>
<path d="M218.6 254.4 L216.5 250.8 L211.4 228.4 L213.2 230.9Z" fill="#82c460" stroke="#000" stroke-width="1"/>
<path d="M221.1 271.4 L218.8 266.3 L216.6 256.8 L218.8 261.2Z" fill="#80c15f" stroke="#000" stroke-width="1"/>
<path d="M218.8 261.2 L216.6 256.8 L214.4 246.9 L216.5 250.8Z" fill="#80c15f" stroke="#000" stroke-width="1"/>
<path d="M216.5 250.8 L214.4 246.9 L209.7 225.8 L211.4 228.4Z" fill="#80c15f" stroke="#000" stroke-width="1"/>
<path d="M218.8 266.3 L216.6 260.9 L214.6 251.9 L216.6 256.8Z" fill="#7ebe5d" stroke="#000" stroke-width="1"/>
<path d="M216.6 256.8 L214.6 251.9 L212.6 242.7 L214.4 246.9Z" fill="#7ebe5d" stroke="#000" stroke-width="1"/>
<path d="M214.4 246.9 L212.6 242.7 L208.1 222.9 L209.7 225.8Z" fill="#7ebe5d" stroke="#000" stroke-width="1"/>
<path d="M216.6 260.9 L214.6 255.1 L212.7 246.8 L214.6 251.9Z" fill="#7cba5c" stroke="#000" stroke-width="1"/>
<path d="M214.6 251.9 L212.7 246.8 L210.8 238.2 L212.6 242.7Z" fill="#7cba5c" stroke="#000" stroke-width="1"/>
<path d="M212.6 242.7 L210.8 238.2 L206.7 219.8 L208.1 222.9Z" fill="#7cba5c" stroke="#000" stroke-width="1"/>
<path d="M214.6 255.1 L212.8 248.9 L211.0 241.2 L212.7 246.8Z" fill="#7bb75a" stroke="#000" stroke-width="1"/>
<path d="M212.7 246.8 L211.0 241.2 L209.2 233.4 L210.8 238.2Z" fill="#7bb75a" stroke="#000" stroke-width="1"/>
<path d="M210.8 238.2 L209.2 233.4 L205.4 216.5 L206.7 219.8Z" fill="#7bb75a" stroke="#000" stroke-width="1"/>
<path d="M212.8 248.9 L211.2 242.3 L209.5 235.4 L211.0 241.2Z" fill="#79b459" stroke="#000" stroke-width="1"/>
<path d="M211.0 241.2 L209.5 235.4 L207.8 228.3 L209.2 233.4Z" fill="#79b459" stroke="#000" stroke-width="1"/>
<path d="M209.2 233.4 L207.8 228.3 L204.2 213.1 L205.4 216.5Z" fill="#79b459" stroke="#000" stroke-width="1"/>
<path d="M211.2 242.3 L209.8 235.5 L208.2 229.4 L209.5 235.4Z" fill="#77b157" stroke="#000" stroke-width="1"/>
<path d="M209.5 235.4 L208.2 229.4 L206.6 223.1 L207.8 228.3Z" fill="#77b157" stroke="#000" stroke-width="1"/>
<path d="M207.8 228.3 L206.6 223.1 L203.1 209.5 L204.2 213.1Z" fill="#77b157" stroke="#000" stroke-width="1"/>
<path d="M209.8 235.5 L208.6 228.4 L207.1 223.1 L208.2 229.4Z" fill="#75ad56" stroke="#000" stroke-width="1"/>
<path d="M208.2 229.4 L207.1 223.1 L205.5 217.6 L206.6 223.1Z" fill="#75ad56" stroke="#000" stroke-width="1"/>
<path d="M206.6 223.1 L205.5 217.6 L202.2 205.7 L203.1 209.5Z" fill="#75ad56" stroke="#000" stroke-width="1"/>
<path d="M208.6 228.4 L207.6 221.1 L206.1 216.6 L207.1 223.1Z" fill="#74aa54" stroke="#000" stroke-width="1"/>
<path d="M207.1 223.1 L206.1 216.6 L204.7 211.9 L205.5 217.6Z" fill="#74aa54" stroke="#000" stroke-width="1"/>
<path d="M205.5 217.6 L204.7 211.9 L201.5 201.9 L202.2 205.7Z" fill="#74aa54" stroke="#000" stroke-width="1"/>
<path d="M207.6 221.1 L206.8 213.6 L205.4 209.9 L206.1 216.6Z" fill="#72a753" stroke="#000" stroke-width="1"/>
<path d="M206.1 216.6 L205.4 209.9 L204.0 206.1 L204.7 211.9Z" fill="#72a753" stroke="#000" stroke-width="1"/>
<path d="M204.7 211.9 L204.0 206.1 L200.9 197.9 L201.5 201.9Z" fill="#72a753" stroke="#000" stroke-width="1"/>
<path d="M206.8 213.6 L206.3 206.0 L204.9 203.1 L205.4 209.9Z" fill="#70a352" stroke="#000" stroke-width="1"/>
<path d="M205.4 209.9 L204.9 203.1 L203.5 200.2 L204.0 206.1Z" fill="#70a352" stroke="#000" stroke-width="1"/>
<path d="M204.0 206.1 L203.5 200.2 L200.5 193.9 L200.9 197.9Z" fill="#70a352" stroke="#000" stroke-width="1"/>
<path d="M206.3 206.0 L206.0 198.2 L204.6 196.2 L204.9 203.1Z" fill="#6ea050" stroke="#000" stroke-width="1"/>
<path d="M204.9 203.1 L204.6 196.2 L203.2 194.2 L203.5 200.2Z" fill="#6ea050" stroke="#000" stroke-width="1"/>
<path d="M203.5 200.2 L203.2 194.2 L200.2 189.8 L200.5 193.9Z" fill="#6ea050" stroke="#000" stroke-width="1"/>
<path d="M206.0 198.2 L205.9 190.4 L204.5 189.3 L204.6 196.2Z" fill="#6c9d4e" stroke="#000" stroke-width="1"/>
<path d="M204.6 196.2 L204.5 189.3 L203.1 188.1 L203.2 194.2Z" fill="#6c9d4e" stroke="#000" stroke-width="1"/>
<path d="M203.2 194.2 L203.1 188.1 L200.1 185.7 L200.2 189.8Z" fill="#6c9d4e" stroke="#000" stroke-width="1"/>
<path d="M205.9 190.4 L206.0 182.5 L204.6 182.3 L204.5 189.3Z" fill="#6a9b4c" stroke="#000" stroke-width="1"/>
<path d="M204.5 189.3 L204.6 182.3 L203.2 182.0 L203.1 188.1Z" fill="#6a9b4c" stroke="#000" stroke-width="1"/>
<path d="M203.1 188.1 L203.2 182.0 L200.1 181.5 L200.1 185.7Z" fill="#6a9b4c" stroke="#000" stroke-width="1"/>
<path d="M206.0 182.5 L206.4 174.6 L205.0 175.3 L204.6 182.3Z" fill="#68984b" stroke="#000" stroke-width="1"/>
<path d="M204.6 182.3 L205.0 175.3 L203.5 176.0 L203.2 182.0Z" fill="#68984b" stroke="#000" stroke-width="1"/>
<path d="M203.2 182.0 L203.5 176.0 L200.4 177.4 L200.1 181.5Z" fill="#68984b" stroke="#000" stroke-width="1"/>
<path d="M206.4 174.6 L207.0 166.8 L205.5 168.4 L205.0 175.3Z" fill="#659549" stroke="#000" stroke-width="1"/>
<path d="M205.0 175.3 L205.5 168.4 L204.0 169.9 L203.5 176.0Z" fill="#659549" stroke="#000" stroke-width="1"/>
<path d="M203.5 176.0 L204.0 169.9 L200.7 173.3 L200.4 177.4Z" fill="#659549" stroke="#000" stroke-width="1"/>
<path d="M207.0 166.8 L207.8 159.1 L206.3 161.5 L205.5 168.4Z" fill="#639347" stroke="#000" stroke-width="1"/>
<path d="M205.5 168.4 L206.3 161.5 L204.7 164.0 L204.0 169.9Z" fill="#639347" stroke="#000" stroke-width="1"/>
<path d="M204.0 169.9 L204.7 164.0 L201.3 169.2 L200.7 173.3Z" fill="#639347" stroke="#000" stroke-width="1"/>
<path d="M207.8 159.1 L208.9 151.5 L207.2 154.7 L206.3 161.5Z" fill="#619045" stroke="#000" stroke-width="1"/>
<path d="M206.3 161.5 L207.2 154.7 L205.6 158.1 L204.7 164.0Z" fill="#619045" stroke="#000" stroke-width="1"/>
<path d="M204.7 164.0 L205.6 158.1 L202.0 165.2 L201.3 169.2Z" fill="#619045" stroke="#000" stroke-width="1"/>
<path d="M208.9 151.5 L211.0 139.7 L203.4 159.0 L202.0 165.2Z" fill="#5e8c43" stroke="#000" stroke-width="1"/>
<path d="M211.0 139.7 L213.6 128.5 L205.2 153.1 L203.4 159.0Z" fill="#5b8840" stroke="#000" stroke-width="1"/>
<path d="M213.6 128.5 L216.8 118.0 L207.4 147.6 L205.2 153.1Z" fill="#57843d" stroke="#000" stroke-width="1"/>
<path d="M216.8 118.0 L220.3 108.4 L209.9 142.6 L207.4 147.6Z" fill="#57833c" stroke="#000" stroke-width="1"/>
<path d="M220.3 108.4 L224.3 99.7 L212.6 138.0 L209.9 142.6Z" fill="#58853d" stroke="#000" stroke-width="1"/>
<path d="M224.3 99.7 L227.5 93.9 L222.1 111.5 L219.3 116.1Z" fill="#59873e" stroke="#000" stroke-width="1"/>
<path d="M219.3 116.1 L222.1 111.5 L214.9 135.0 L212.6 138.0Z" fill="#59873e" stroke="#000" stroke-width="1"/>
<path d="M227.5 93.9 L230.9 88.8 L225.1 107.5 L222.1 111.5Z" fill="#5a883e" stroke="#000" stroke-width="1"/>
<path d="M222.1 111.5 L225.1 107.5 L217.2 132.3 L214.9 135.0Z" fill="#5a883e" stroke="#000" stroke-width="1"/>
<path d="M230.9 88.8 L234.4 84.4 L228.1 104.0 L225.1 107.5Z" fill="#5b8a3f" stroke="#000" stroke-width="1"/>
<path d="M225.1 107.5 L228.1 104.0 L219.7 130.0 L217.2 132.3Z" fill="#5b8a3f" stroke="#000" stroke-width="1"/>
<path d="M234.4 84.4 L238.1 80.7 L231.3 101.0 L228.1 104.0Z" fill="#5b8b40" stroke="#000" stroke-width="1"/>
<path d="M228.1 104.0 L231.3 101.0 L222.3 128.1 L219.7 130.0Z" fill="#5b8b40" stroke="#000" stroke-width="1"/>
<path d="M238.1 80.7 L241.8 77.8 L234.6 98.7 L231.3 101.0Z" fill="#5c8c40" stroke="#000" stroke-width="1"/>
<path d="M231.3 101.0 L234.6 98.7 L224.9 126.6 L222.3 128.1Z" fill="#5c8c40" stroke="#000" stroke-width="1"/>
<path d="M241.8 77.8 L248.2 74.7 L240.2 96.2 L234.6 98.7Z" fill="#5e8f42" stroke="#000" stroke-width="1"/>
<path d="M234.6 98.7 L240.2 96.2 L229.5 125.0 L224.9 126.6Z" fill="#5e8f42" stroke="#000" stroke-width="1"/>
<path d="M248.2 74.7 L254.7 73.8 L245.8 95.5 L240.2 96.2Z" fill="#609243" stroke="#000" stroke-width="1"/>
<path d="M240.2 96.2 L245.8 95.5 L234.0 124.6 L229.5 125.0Z" fill="#609243" stroke="#000" stroke-width="1"/>
<path d="M254.7 73.8 L261.0 75.1 L251.4 96.6 L245.8 95.5Z" fill="#639645" stroke="#000" stroke-width="1"/>
<path d="M245.8 95.5 L251.4 96.6 L238.6 125.3 L234.0 124.6Z" fill="#639645" stroke="#000" stroke-width="1"/>
<clipPath id="cH"><path d="M214.0 130.6 L217.8 124.8 L222.1 118.4 L227.2 112.8 L229.6 111.2 L231.6 110.6 L233.6 111.5 L271.3 130.1 L273.6 131.1 L275.7 132.6 L277.8 134.7 L279.7 137.3 L281.5 140.5 L283.1 144.1 L284.6 148.1 L285.9 152.6 L287.0 157.3 L287.8 162.4 L288.5 167.7 L288.9 173.2 L289.1 178.8 L289.0 184.4 L288.7 190.1 L288.1 195.6 L287.4 201.1 L286.4 206.3 L285.2 211.3 L283.8 216.0 L282.2 220.3 L280.5 224.3 L278.6 227.8 L276.6 230.8 L274.5 233.3 L272.3 235.3 L270.1 236.6 L267.8 237.4 L233.6 254.6 L231.6 255.5 L229.4 254.8 L222.1 250.6 L215.7 245.3 L211.4 236.8 L209.3 227.1 L190.0 227.0 L190.0 131.0Z"/></clipPath>
<g clip-path="url(#cH)">
<linearGradient id="gH" gradientUnits="userSpaceOnUse" x1="0" y1="110" x2="0" y2="256"><stop offset="0" stop-color="#178a48"/><stop offset="0.6" stop-color="#1c9a56"/><stop offset="0.8" stop-color="#0c5a2c"/><stop offset="0.93" stop-color="#05301a"/><stop offset="1" stop-color="#042814"/></linearGradient>
<path d="M214.0 130.6 L217.8 124.8 L222.1 118.4 L227.2 112.8 L229.6 111.2 L231.6 110.6 L233.6 111.5 L271.3 130.1 L273.6 131.1 L275.7 132.6 L277.8 134.7 L279.7 137.3 L281.5 140.5 L283.1 144.1 L284.6 148.1 L285.9 152.6 L287.0 157.3 L287.8 162.4 L288.5 167.7 L288.9 173.2 L289.1 178.8 L289.0 184.4 L288.7 190.1 L288.1 195.6 L287.4 201.1 L286.4 206.3 L285.2 211.3 L283.8 216.0 L282.2 220.3 L280.5 224.3 L278.6 227.8 L276.6 230.8 L274.5 233.3 L272.3 235.3 L270.1 236.6 L267.8 237.4 L233.6 254.6 L231.6 255.5 L229.4 254.8 L222.1 250.6 L215.7 245.3 L211.4 236.8 L209.3 227.1 L190.0 227.0 L190.0 131.0Z" fill="url(#gH)"/>
<path d="M238.9 246.7 L231.7 253.7 L245.3 249.3 L251.0 242.1Z" fill="#042410" stroke="#000" stroke-width="1"/>
<path d="M251.0 242.1 L245.3 249.3 L258.1 241.7 L264.9 235.7Z" fill="#042410" stroke="#000" stroke-width="1"/>
<path d="M264.9 235.7 L258.1 241.7 L271.2 236.0 L276.6 230.8Z" fill="#042410" stroke="#000" stroke-width="1"/>
<path d="M231.7 253.7 L224.1 256.0 L238.2 250.3 L245.3 249.3Z" fill="#042611" stroke="#000" stroke-width="1"/>
<path d="M245.3 249.3 L238.2 250.3 L251.8 242.3 L258.1 241.7Z" fill="#042611" stroke="#000" stroke-width="1"/>
<path d="M258.1 241.7 L251.8 242.3 L265.5 237.7 L271.2 236.0Z" fill="#042611" stroke="#000" stroke-width="1"/>
<path d="M224.1 256.0 L216.7 253.2 L231.1 246.9 L238.2 250.3Z" fill="#062e15" stroke="#000" stroke-width="1"/>
<path d="M238.2 250.3 L231.1 246.9 L245.6 242.6 L251.8 242.3Z" fill="#062e15" stroke="#000" stroke-width="1"/>
<path d="M251.8 242.3 L245.6 242.6 L260.0 235.6 L265.5 237.7Z" fill="#062e15" stroke="#000" stroke-width="1"/>
<path d="M216.7 253.2 L209.9 245.7 L225.0 239.8 L231.1 246.9Z" fill="#094220" stroke="#000" stroke-width="1"/>
<path d="M231.1 246.9 L225.0 239.8 L240.1 235.6 L245.6 242.6Z" fill="#094220" stroke="#000" stroke-width="1"/>
<path d="M245.6 242.6 L240.1 235.6 L254.9 230.1 L260.0 235.6Z" fill="#094220" stroke="#000" stroke-width="1"/>
<path d="M209.9 245.7 L204.3 233.9 L219.8 230.7 L225.0 239.8Z" fill="#0d5b2e" stroke="#000" stroke-width="1"/>
<path d="M225.0 239.8 L219.8 230.7 L235.4 226.6 L240.1 235.6Z" fill="#0d5b2e" stroke="#000" stroke-width="1"/>
<path d="M240.1 235.6 L235.4 226.6 L250.7 221.4 L254.9 230.1Z" fill="#0d5b2e" stroke="#000" stroke-width="1"/>
<path d="M204.3 233.9 L200.2 218.6 L214.7 215.8 L219.8 230.7Z" fill="#167a43" stroke="#000" stroke-width="1"/>
<path d="M219.8 230.7 L214.7 215.8 L231.5 211.8 L235.4 226.6Z" fill="#167a43" stroke="#000" stroke-width="1"/>
<path d="M235.4 226.6 L231.5 211.8 L247.6 210.1 L250.7 221.4Z" fill="#167a43" stroke="#000" stroke-width="1"/>
<path d="M200.2 218.6 L197.9 201.0 L214.2 198.2 L214.7 215.8Z" fill="#26a160" stroke="#000" stroke-width="1"/>
<path d="M214.7 215.8 L214.2 198.2 L231.1 198.5 L231.5 211.8Z" fill="#26a160" stroke="#000" stroke-width="1"/>
<path d="M231.5 211.8 L231.1 198.5 L245.9 197.0 L247.6 210.1Z" fill="#26a160" stroke="#000" stroke-width="1"/>
<path d="M197.9 201.0 L197.5 182.0 L213.9 182.6 L214.2 198.2Z" fill="#37c17a" stroke="#000" stroke-width="1"/>
<path d="M214.2 198.2 L213.9 182.6 L230.5 181.6 L231.1 198.5Z" fill="#37c17a" stroke="#000" stroke-width="1"/>
<path d="M231.1 198.5 L230.5 181.6 L245.6 183.0 L245.9 197.0Z" fill="#37c17a" stroke="#000" stroke-width="1"/>
<path d="M197.5 182.0 L199.1 163.2 L214.7 164.6 L213.9 182.6Z" fill="#3ac77f" stroke="#000" stroke-width="1"/>
<path d="M213.9 182.6 L214.7 164.6 L230.0 166.3 L230.5 181.6Z" fill="#3ac77f" stroke="#000" stroke-width="1"/>
<path d="M230.5 181.6 L230.0 166.3 L246.8 169.0 L245.6 183.0Z" fill="#3ac77f" stroke="#000" stroke-width="1"/>
<path d="M199.1 163.2 L202.6 145.7 L219.2 148.5 L214.7 164.6Z" fill="#30bc73" stroke="#000" stroke-width="1"/>
<path d="M214.7 164.6 L219.2 148.5 L234.5 152.8 L230.0 166.3Z" fill="#30bc73" stroke="#000" stroke-width="1"/>
<path d="M230.0 166.3 L234.5 152.8 L249.4 156.1 L246.8 169.0Z" fill="#30bc73" stroke="#000" stroke-width="1"/>
<path d="M202.6 145.7 L207.7 130.7 L222.5 136.9 L219.2 148.5Z" fill="#25ad64" stroke="#000" stroke-width="1"/>
<path d="M219.2 148.5 L222.5 136.9 L238.5 139.3 L234.5 152.8Z" fill="#25ad64" stroke="#000" stroke-width="1"/>
<path d="M234.5 152.8 L238.5 139.3 L253.2 145.0 L249.4 156.1Z" fill="#25ad64" stroke="#000" stroke-width="1"/>
<path d="M207.7 130.7 L214.1 119.3 L228.6 125.7 L222.5 136.9Z" fill="#1ea158" stroke="#000" stroke-width="1"/>
<path d="M222.5 136.9 L228.6 125.7 L244.3 131.3 L238.5 139.3Z" fill="#1ea158" stroke="#000" stroke-width="1"/>
<path d="M238.5 139.3 L244.3 131.3 L258.0 136.6 L253.2 145.0Z" fill="#1ea158" stroke="#000" stroke-width="1"/>
<path d="M214.1 119.3 L221.3 112.3 L235.0 117.4 L228.6 125.7Z" fill="#1b9851" stroke="#000" stroke-width="1"/>
<path d="M228.6 125.7 L235.0 117.4 L249.3 126.0 L244.3 131.3Z" fill="#1b9851" stroke="#000" stroke-width="1"/>
<path d="M244.3 131.3 L249.3 126.0 L263.4 131.4 L258.0 136.6Z" fill="#1b9851" stroke="#000" stroke-width="1"/>
<path d="M221.3 112.3 L228.9 110.0 L242.8 116.4 L235.0 117.4Z" fill="#18904c" stroke="#000" stroke-width="1"/>
<path d="M235.0 117.4 L242.8 116.4 L256.1 122.5 L249.3 126.0Z" fill="#18904c" stroke="#000" stroke-width="1"/>
<path d="M249.3 126.0 L256.1 122.5 L269.1 129.7 L263.4 131.4Z" fill="#18904c" stroke="#000" stroke-width="1"/>
<path d="M228.9 110.0 L236.3 112.8 L249.4 120.3 L242.8 116.4Z" fill="#158847" stroke="#000" stroke-width="1"/>
<path d="M242.8 116.4 L249.4 120.3 L261.9 124.3 L256.1 122.5Z" fill="#158847" stroke="#000" stroke-width="1"/>
<path d="M256.1 122.5 L261.9 124.3 L274.6 131.8 L269.1 129.7Z" fill="#158847" stroke="#000" stroke-width="1"/>
<path d="M236.3 112.8 L243.1 120.3 L256.0 126.1 L249.4 120.3Z" fill="#148444" stroke="#000" stroke-width="1"/>
<path d="M249.4 120.3 L256.0 126.1 L267.5 131.6 L261.9 124.3Z" fill="#148444" stroke="#000" stroke-width="1"/>
<path d="M261.9 124.3 L267.5 131.6 L279.7 137.3 L274.6 131.8Z" fill="#148444" stroke="#000" stroke-width="1"/>
</g>
<path d="M214.0 130.6 L217.8 124.8 L222.1 118.4 L227.2 112.8 L229.6 111.2 L231.6 110.6 L233.6 111.5 L271.3 130.1 L273.6 131.1 L275.7 132.6 L277.8 134.7 L279.7 137.3 L281.5 140.5 L283.1 144.1 L284.6 148.1 L285.9 152.6 L287.0 157.3 L287.8 162.4 L288.5 167.7 L288.9 173.2 L289.1 178.8 L289.0 184.4 L288.7 190.1 L288.1 195.6 L287.4 201.1 L286.4 206.3 L285.2 211.3 L283.8 216.0 L282.2 220.3 L280.5 224.3 L278.6 227.8 L276.6 230.8 L274.5 233.3 L272.3 235.3 L270.1 236.6 L267.8 237.4 L233.6 254.6 L231.6 255.5 L229.4 254.8 L222.1 250.6 L215.7 245.3 L211.4 236.8 L209.3 227.1 L190.0 227.0 L190.0 131.0Z" fill="none" stroke="#000" stroke-width="1"/>
</g>
<path d="M289.0 184.4 L287.8 198.4 L281.4 193.1 L282.2 183.7Z" fill="#5b7fb0" stroke="#000" stroke-width="1"/>
<path d="M287.8 198.4 L285.2 211.3 L279.6 201.9 L281.4 193.1Z" fill="#5b7fb0" stroke="#000" stroke-width="1"/>
<path d="M285.2 211.3 L281.4 222.4 L277.0 209.3 L279.6 201.9Z" fill="#5b7fb0" stroke="#000" stroke-width="1"/>
<path d="M281.4 222.4 L276.6 230.8 L273.8 215.0 L277.0 209.3Z" fill="#5b7fb0" stroke="#000" stroke-width="1"/>
<path d="M276.6 230.8 L271.2 236.0 L270.1 218.6 L273.8 215.0Z" fill="#5b7fb0" stroke="#000" stroke-width="1"/>
<path d="M271.2 236.0 L265.5 237.7 L266.3 219.7 L270.1 218.6Z" fill="#5b7fb0" stroke="#000" stroke-width="1"/>
<path d="M265.5 237.7 L260.0 235.6 L262.5 218.3 L266.3 219.7Z" fill="#5b7fb0" stroke="#000" stroke-width="1"/>
<path d="M260.0 235.6 L254.9 230.1 L259.1 214.5 L262.5 218.3Z" fill="#5b7fb0" stroke="#000" stroke-width="1"/>
<path d="M254.9 230.1 L250.7 221.4 L256.3 208.7 L259.1 214.5Z" fill="#5b7fb0" stroke="#000" stroke-width="1"/>
<path d="M250.7 221.4 L247.6 210.1 L254.2 201.0 L256.3 208.7Z" fill="#5b7fb0" stroke="#000" stroke-width="1"/>
<path d="M247.6 210.1 L245.9 197.0 L253.0 192.2 L254.2 201.0Z" fill="#5b7fb0" stroke="#000" stroke-width="1"/>
<path d="M245.9 197.0 L245.6 183.0 L252.8 182.7 L253.0 192.2Z" fill="#5b7fb0" stroke="#000" stroke-width="1"/>
<path d="M245.6 183.0 L246.8 169.0 L253.6 173.3 L252.8 182.7Z" fill="#5b7fb0" stroke="#000" stroke-width="1"/>
<path d="M246.8 169.0 L249.4 156.1 L255.4 164.5 L253.6 173.3Z" fill="#5b7fb0" stroke="#000" stroke-width="1"/>
<path d="M249.4 156.1 L253.2 145.0 L258.0 157.1 L255.4 164.5Z" fill="#5b7fb0" stroke="#000" stroke-width="1"/>
<path d="M253.2 145.0 L258.0 136.6 L261.2 151.4 L258.0 157.1Z" fill="#5b7fb0" stroke="#000" stroke-width="1"/>
<path d="M258.0 136.6 L263.4 131.4 L264.9 147.8 L261.2 151.4Z" fill="#5b7fb0" stroke="#000" stroke-width="1"/>
<path d="M263.4 131.4 L269.1 129.7 L268.7 146.7 L264.9 147.8Z" fill="#5b7fb0" stroke="#000" stroke-width="1"/>
<path d="M269.1 129.7 L274.6 131.8 L272.5 148.1 L268.7 146.7Z" fill="#5b7fb0" stroke="#000" stroke-width="1"/>
<path d="M274.6 131.8 L279.7 137.3 L275.9 151.9 L272.5 148.1Z" fill="#5b7fb0" stroke="#000" stroke-width="1"/>
<path d="M279.7 137.3 L283.9 146.0 L278.7 157.7 L275.9 151.9Z" fill="#5b7fb0" stroke="#000" stroke-width="1"/>
<path d="M283.9 146.0 L287.0 157.3 L280.8 165.4 L278.7 157.7Z" fill="#5b7fb0" stroke="#000" stroke-width="1"/>
<path d="M287.0 157.3 L288.7 170.4 L282.0 174.2 L280.8 165.4Z" fill="#5b7fb0" stroke="#000" stroke-width="1"/>
<path d="M288.7 170.4 L289.0 184.4 L282.2 183.7 L282.0 174.2Z" fill="#5b7fb0" stroke="#000" stroke-width="1"/>
<clipPath id="cF"><path d="M282.2 183.7 L281.4 193.1 L279.6 201.9 L277.0 209.3 L273.8 215.0 L270.1 218.6 L266.3 219.7 L262.5 218.3 L259.1 214.5 L256.3 208.7 L254.2 201.0 L253.0 192.2 L252.8 182.7 L253.6 173.3 L255.4 164.5 L258.0 157.1 L261.2 151.4 L264.9 147.8 L268.7 146.7 L272.5 148.1 L275.9 151.9 L278.7 157.7 L280.8 165.4 L282.0 174.2Z"/></clipPath>
<g clip-path="url(#cF)">
<rect x="250" y="140.0" width="36" height="17.8" fill="#0c2a44"/>
<rect x="250" y="157.3" width="36" height="12.0" fill="#123e66"/>
<rect x="250" y="168.8" width="36" height="15.0" fill="#154a7a"/>
<rect x="250" y="183.3" width="36" height="14.9" fill="#19568c"/>
<rect x="250" y="197.7" width="36" height="13.0" fill="#1c5e96"/>
<rect x="250" y="210.2" width="36" height="20.3" fill="#1e649e"/>
<path d="M250 157.3 H286" stroke="#000" stroke-width="1" fill="none"/>
<path d="M250 168.8 H286" stroke="#000" stroke-width="1" fill="none"/>
<path d="M250 183.3 H286" stroke="#000" stroke-width="1" fill="none"/>
<path d="M250 197.7 H286" stroke="#000" stroke-width="1" fill="none"/>
<path d="M250 210.2 H286" stroke="#000" stroke-width="1" fill="none"/>
<path d="M268.3 147 L266 160 L264.6 175 L264.3 183.3 L263.6 197 L261.6 212" stroke="#000" stroke-width="1" fill="none"/>
<path d="M273.5 197.7 L270.5 210.2 L268 220" stroke="#000" stroke-width="1" fill="none"/>
</g>
<path d="M282.2 183.7 L281.4 193.1 L279.6 201.9 L277.0 209.3 L273.8 215.0 L270.1 218.6 L266.3 219.7 L262.5 218.3 L259.1 214.5 L256.3 208.7 L254.2 201.0 L253.0 192.2 L252.8 182.7 L253.6 173.3 L255.4 164.5 L258.0 157.1 L261.2 151.4 L264.9 147.8 L268.7 146.7 L272.5 148.1 L275.9 151.9 L278.7 157.7 L280.8 165.4 L282.0 174.2Z" fill="none" stroke="#000" stroke-width="1"/>
<radialGradient id="gD" cx="0.4" cy="0.35" r="0.7"><stop offset="0" stop-color="#7dff6a"/><stop offset="0.35" stop-color="#16e010"/><stop offset="1" stop-color="#07960a"/></radialGradient>
<circle cx="267.6" cy="183.6" r="4.6" fill="url(#gD)" shape-rendering="auto"/>
</svg>
</div>

<div class="abs" id="tools" style="left:0;top:0">
<svg style="left:409px;top:11px" width="24" height="232" viewBox="0 0 24 232">
<defs><radialGradient id="lens" cx="0.3" cy="0.25" r="0.6"><stop offset="0" stop-color="#b8b8b8"/><stop offset="0.45" stop-color="#f4f4f4"/><stop offset="1" stop-color="#ffffff"/></radialGradient></defs>
<polygon points="3.10,6.70 8.50,11.60 6.70,11.60 6.70,16.70 3.10,16.70" fill="#0a9a3c"/><polygon points="3.10,16.90 6.70,16.90 6.70,19.70 3.10,19.70" fill="#e8001c"/><polygon points="7.20,17.20 12.30,17.20 12.30,14.90 16.90,19.70 7.20,19.70" fill="#0a1e8c"/><text x="9.1" y="8.8" font-family="Liberation Sans,sans-serif" font-weight="bold" font-size="9" text-anchor="middle">Y</text><text x="17.9" y="16.9" font-family="Liberation Sans,sans-serif" font-weight="bold" font-size="9" text-anchor="middle">Z</text>
<polygon points="20.85,32.70 15.45,37.60 17.25,37.60 17.25,42.70 20.85,42.70" fill="#0a9a3c"/><polygon points="20.85,42.90 17.25,42.90 17.25,45.70 20.85,45.70" fill="#e8001c"/><polygon points="16.75,43.20 11.65,43.20 11.65,40.90 7.05,45.70 16.75,45.70" fill="#0a1e8c"/><text x="15.0" y="34.8" font-family="Liberation Sans,sans-serif" font-weight="bold" font-size="9" text-anchor="middle">Y</text><text x="6.4" y="43.0" font-family="Liberation Sans,sans-serif" font-weight="bold" font-size="9" text-anchor="middle">Z</text>
<polygon points="3.10,58.70 8.50,63.60 6.70,63.60 6.70,68.70 3.10,68.70" fill="#0a1e8c"/><polygon points="3.10,68.90 6.70,68.90 6.70,71.70 3.10,71.70" fill="#0a9a3c"/><polygon points="7.20,69.20 12.30,69.20 12.30,66.90 16.90,71.70 7.20,71.70" fill="#e8001c"/><text x="9.2" y="60.8" font-family="Liberation Sans,sans-serif" font-weight="bold" font-size="9" text-anchor="middle">Z</text><text x="17.9" y="69.0" font-family="Liberation Sans,sans-serif" font-weight="bold" font-size="9" text-anchor="middle">X</text>
<polygon points="3.10,93.05 8.50,88.15 6.70,88.15 6.70,83.05 3.10,83.05" fill="#0a1e8c"/><polygon points="3.10,82.85 6.70,82.85 6.70,80.05 3.10,80.05" fill="#0a9a3c"/><polygon points="7.20,82.55 12.30,82.55 12.30,84.85 16.90,80.05 7.20,80.05" fill="#e8001c"/><text x="17.9" y="90.8" font-family="Liberation Sans,sans-serif" font-weight="bold" font-size="9" text-anchor="middle">X</text><text x="10.8" y="96.8" font-family="Liberation Sans,sans-serif" font-weight="bold" font-size="9" text-anchor="middle">Z</text>
<polygon points="3.10,119.05 8.50,114.15 6.70,114.15 6.70,109.05 3.10,109.05" fill="#0a9a3c"/><polygon points="3.10,108.85 6.70,108.85 6.70,106.05 3.10,106.05" fill="#0a1e8c"/><polygon points="7.20,108.55 12.30,108.55 12.30,110.85 16.90,106.05 7.20,106.05" fill="#e8001c"/><text x="17.9" y="116.8" font-family="Liberation Sans,sans-serif" font-weight="bold" font-size="9" text-anchor="middle">X</text><text x="10.8" y="122.8" font-family="Liberation Sans,sans-serif" font-weight="bold" font-size="9" text-anchor="middle">Y</text>
<polygon points="3.10,136.70 8.50,141.60 6.70,141.60 6.70,146.70 3.10,146.70" fill="#0a9a3c"/><polygon points="3.10,146.90 6.70,146.90 6.70,149.70 3.10,149.70" fill="#0a1e8c"/><polygon points="7.20,147.20 12.30,147.20 12.30,144.90 16.90,149.70 7.20,149.70" fill="#e8001c"/><text x="9.1" y="138.8" font-family="Liberation Sans,sans-serif" font-weight="bold" font-size="9" text-anchor="middle">Y</text><text x="17.9" y="146.9" font-family="Liberation Sans,sans-serif" font-weight="bold" font-size="9" text-anchor="middle">X</text>
<line x1="9.3" y1="168.7" x2="4.1" y2="173.7" stroke="#000" stroke-width="2.6" stroke-linecap="round"/><circle cx="14.60" cy="163.95" r="5.8" fill="url(#lens)" stroke="#000" stroke-width="1.2"/>
<path d="M11.6 171.3 H20.4 M16.2 166.8 V175.9" stroke="#f0f0f0" stroke-width="3.2" fill="none"/>
<path d="M12.3 171.3 H19.7 M16.2 167.5 V175.2" stroke="#000" stroke-width="1.4" fill="none"/>
<line x1="9.3" y1="194.7" x2="4.1" y2="199.7" stroke="#000" stroke-width="2.6" stroke-linecap="round"/><circle cx="14.60" cy="189.95" r="5.8" fill="url(#lens)" stroke="#000" stroke-width="1.2"/>
<path d="M12.3 198.9 H20.4" stroke="#000" stroke-width="1.7" fill="none"/>
<rect x="3.3" y="210.6" width="17.4" height="16.4" fill="#a4a4a4" stroke="#111" stroke-width="1"/>
<rect x="4.3" y="211.6" width="15.4" height="14.6" fill="none" stroke="#fff" stroke-width="1"/>
<line x1="3.3" y1="227.0" x2="20.7" y2="227.0" stroke="#9a9a9a" stroke-width="1"/>
<line x1="6.9" y1="223.0" x2="3.4" y2="226.6" stroke="#000" stroke-width="2.6" stroke-linecap="round"/><circle cx="11.50" cy="218.80" r="5.8" fill="url(#lens)" stroke="#000" stroke-width="1.2"/>
</svg>
</div>

<div class="abs" id="pane"></div>
<div class="abs tab sel" style="left:442px;width:63px">General</div>
<div class="abs tab" style="left:504px;width:74px">Positioning</div>
<div class="abs tab" style="left:577px;width:64px">Settings</div>
<div class="abs tab" style="left:640px;width:79px">Information</div>

<div class="abs combo" style="left:453px;top:40px;width:299px">Define shaft geometry by polygon<svg width="9" height="6" viewBox="0 0 9 6"><path d="M0.6 0.7 L4.5 4.7 L8.4 0.7" fill="none" stroke="#3c3c3c" stroke-width="1.2"/></svg></div>
<div class="abs btn" style="left:759px;top:39px;width:26px;height:22px"><svg style="left:5px;top:2.6px" width="16" height="16" viewBox="0 0 16 16"><defs><linearGradient id="yg" x1="0" y1="0" x2="0" y2="1"><stop offset="0" stop-color="#f2dc5c"/><stop offset="0.45" stop-color="#f8ec9a"/><stop offset="1" stop-color="#e4c63c"/></linearGradient></defs><path d="M5.6 1 H8.6 Q9.2 1 9.2 1.6 V5.6 H12.8 Q13.4 5.6 13.4 6.2 V9 Q13.4 9.6 12.8 9.6 H9.2 V13.4 Q9.2 14 8.6 14 H5.6 Q5 14 5 13.4 V9.6 H1.1 Q0.5 9.6 0.5 9 V6.2 Q0.5 5.6 1.1 5.6 H5 V1.6 Q5 1 5.6 1 Z" fill="url(#yg)" stroke="#c2a02a" stroke-width="1"/></svg>
</div>

<div class="abs t" style="left:452px;top:72px">Name</div>
<div class="abs inp" style="left:486px;top:68px;width:300px">Part 1</div>

<div class="abs t" style="left:452px;top:100px">Material</div>
<div class="abs combo" style="left:586px;top:96px;width:166px">Steel<svg width="9" height="6" viewBox="0 0 9 6"><path d="M0.6 0.7 L4.5 4.7 L8.4 0.7" fill="none" stroke="#3c3c3c" stroke-width="1.2"/></svg></div>
<div class="abs btn" style="left:759px;top:95px;width:26px;height:22px"><svg style="left:5px;top:2.6px" width="16" height="16" viewBox="0 0 16 16"><defs><linearGradient id="yg" x1="0" y1="0" x2="0" y2="1"><stop offset="0" stop-color="#f2dc5c"/><stop offset="0.45" stop-color="#f8ec9a"/><stop offset="1" stop-color="#e4c63c"/></linearGradient></defs><path d="M5.6 1 H8.6 Q9.2 1 9.2 1.6 V5.6 H12.8 Q13.4 5.6 13.4 6.2 V9 Q13.4 9.6 12.8 9.6 H9.2 V13.4 Q9.2 14 8.6 14 H5.6 Q5 14 5 13.4 V9.6 H1.1 Q0.5 9.6 0.5 9 V6.2 Q0.5 5.6 1.1 5.6 H5 V1.6 Q5 1 5.6 1 Z" fill="url(#yg)" stroke="#c2a02a" stroke-width="1"/></svg>
</div>

<div class="abs t" style="left:452px;top:128px">Speed</div>
<div class="abs t" style="left:643px;top:128px">n</div>
<div class="abs inp" style="left:669px;top:124px;width:72px;padding-left:2px;background:#f0f0f0;box-shadow:inset 0 0 0 1px #fff">0</div>
<div class="abs t" style="left:746px;top:128px">rpm</div>
<div class="abs cb" style="left:773px;top:127px"></div>

<div class="abs t" style="left:452px;top:154px">Temperature</div>
<div class="abs t" style="left:662px;top:154px">T</div>
<div class="abs inp" style="left:688px;top:150px;width:72px;padding-left:2px">20</div>
<div class="abs t" style="left:766px;top:154px">°C</div>

<div class="abs cb" style="left:453px;top:178px"></div><div class="abs t" style="left:470px;top:178px;letter-spacing:-0.2px">use second order mesh</div>
<div class="abs cb" style="left:453px;top:201px"></div><div class="abs t" style="left:470px;top:201px;letter-spacing:-0.2px">support modal analysis</div>
<div class="abs cb" style="left:453px;top:224px"></div><div class="abs t" style="left:470px;top:224px;letter-spacing:-0.2px">calculate displacements</div>
<div class="abs cb" style="left:453px;top:247px"></div><div class="abs t" style="left:470px;top:247px;letter-spacing:-0.2px">calculate mode shapes</div>

<div class="abs t" style="left:452px;top:273px">Color</div>
<div class="abs" style="left:754px;top:268px;width:32px;height:23px;background:#00aaff;border-right:1px solid #00557f;border-bottom:1px solid #00557f;border-top:1px solid #33bbff;border-left:1px solid #33bbff"></div>
<div class="abs cb" style="left:453px;top:302px"></div><div class="abs t" style="left:470px;top:302px;letter-spacing:-0.2px">show mesh</div>
<div class="abs" style="left:754px;top:297px;width:32px;height:23px;background:#000080;border-right:1px solid #000040;border-bottom:1px solid #000040"></div>

<div class="abs" id="tbl">
<div style="left:0;top:83px;width:14px;height:30px;background:#f0f0f0"></div>
<div class="vl" style="left:14px;top:0;height:83px"></div>
<div class="vl" style="left:114px;top:0;height:83px"></div>
<div class="vl" style="left:214px;top:0;height:83px"></div>
<div class="vl" style="left:314px;top:0;height:83px"></div>
<div class="vl" style="left:414px;top:0;height:83px"></div>
<div class="vl" style="left:514px;top:0;height:83px"></div>
<div class="vl" style="left:614px;top:0;height:83px"></div>
<div class="hl" style="left:14px;top:52px;width:601px"></div>
<div class="hl" style="left:14px;top:82px;width:601px"></div>
<div class="seg" style="left:15px;top:4px;width:99px;text-align:center">Face</div>
<div class="seg" style="left:115px;top:4px;width:99px;text-align:center">Support</div>
<div class="seg" style="left:215px;top:4px;width:99px;text-align:center">Position</div>
<div class="seg" style="left:315px;top:4px;width:99px;text-align:center">Diameter [mm]</div>
<div class="seg" style="left:415px;top:4px;width:99px;text-align:center">Connection type</div>
<div class="seg" style="left:515px;top:4px;width:99px;text-align:center">Comment</div>
<div class="seg" style="left:4px;top:31px">1</div>
<div class="seg" style="left:4px;top:61px">2</div>
<div class="seg" style="left:18px;top:30px">1</div>
<div class="seg" style="left:118px;top:30px">Not considered</div>
<div class="seg" style="left:217px;top:30px">{0, 0, 0}</div>
<div class="seg" style="left:318px;top:30px">60</div>
<div class="seg" style="left:418px;top:30px">average</div>
<div class="seg" style="left:18px;top:60px">6</div>
<div class="seg" style="left:118px;top:60px">Not considered</div>
<div class="seg" style="left:217px;top:60px">{80, 0, 0}</div>
<div class="seg" style="left:318px;top:60px">50</div>
<div class="seg" style="left:418px;top:60px">rigid</div>
</div>

<div class="abs dbtn" style="top:364px"><svg style="left:4px;top:2px" width="18" height="18" viewBox="0 0 18 18"><path d="M6.5 0.5 H9.5 Q10.5 0.5 10.5 1.5 V5.5 H14.5 Q15.5 5.5 15.5 6.5 V9.5 Q15.5 10.5 14.5 10.5 H10.5 V14.5 Q10.5 15.5 9.5 15.5 H6.5 Q5.5 15.5 5.5 14.5 V10.5 H1.5 Q0.5 10.5 0.5 9.5 V6.5 Q0.5 5.5 1.5 5.5 H5.5 V1.5 Q5.5 0.5 6.5 0.5 Z" fill="#c6c6c6" stroke="#858585" stroke-width="1"/><path d="M8 2.5 V13.5 M2.5 8 H13.5" stroke="#b2b2b2" stroke-width="2" fill="none"/></svg>
</div>
<div class="abs dbtn" style="top:394px"><svg style="left:4px;top:7px" width="18" height="8" viewBox="0 0 18 8"><rect x="0.5" y="0.5" width="15" height="5" rx="1" fill="#c6c6c6" stroke="#858585" stroke-width="1"/><path d="M2.5 3 H13.5" stroke="#b2b2b2" stroke-width="2" fill="none"/></svg>
</div>
<div class="abs dbtn" style="top:424px"><svg style="left:4px;top:2px" width="18" height="18" viewBox="0 0 18 18"><g transform="translate(8.6 8) rotate(45) scale(0.92)"><path d="M-2 -8 H2 Q2.8 -8 2.8 -7.2 V-2.8 H7.2 Q8 -2.8 8 -2 V2 Q8 2.8 7.2 2.8 H2.8 V7.2 Q2.8 8 2 8 H-2 Q-2.8 8 -2.8 7.2 V2.8 H-7.2 Q-8 2.8 -8 2 V-2 Q-8 -2.8 -7.2 -2.8 H-2.8 V-7.2 Q-2.8 -8 -2 -8 Z" fill="#c6c6c6" stroke="#909090" stroke-width="1"/><path d="M0 -6 V6 M-6 0 H6" stroke="#b8b8b8" stroke-width="2" fill="none"/></g></svg>
</div>
</body></html>
